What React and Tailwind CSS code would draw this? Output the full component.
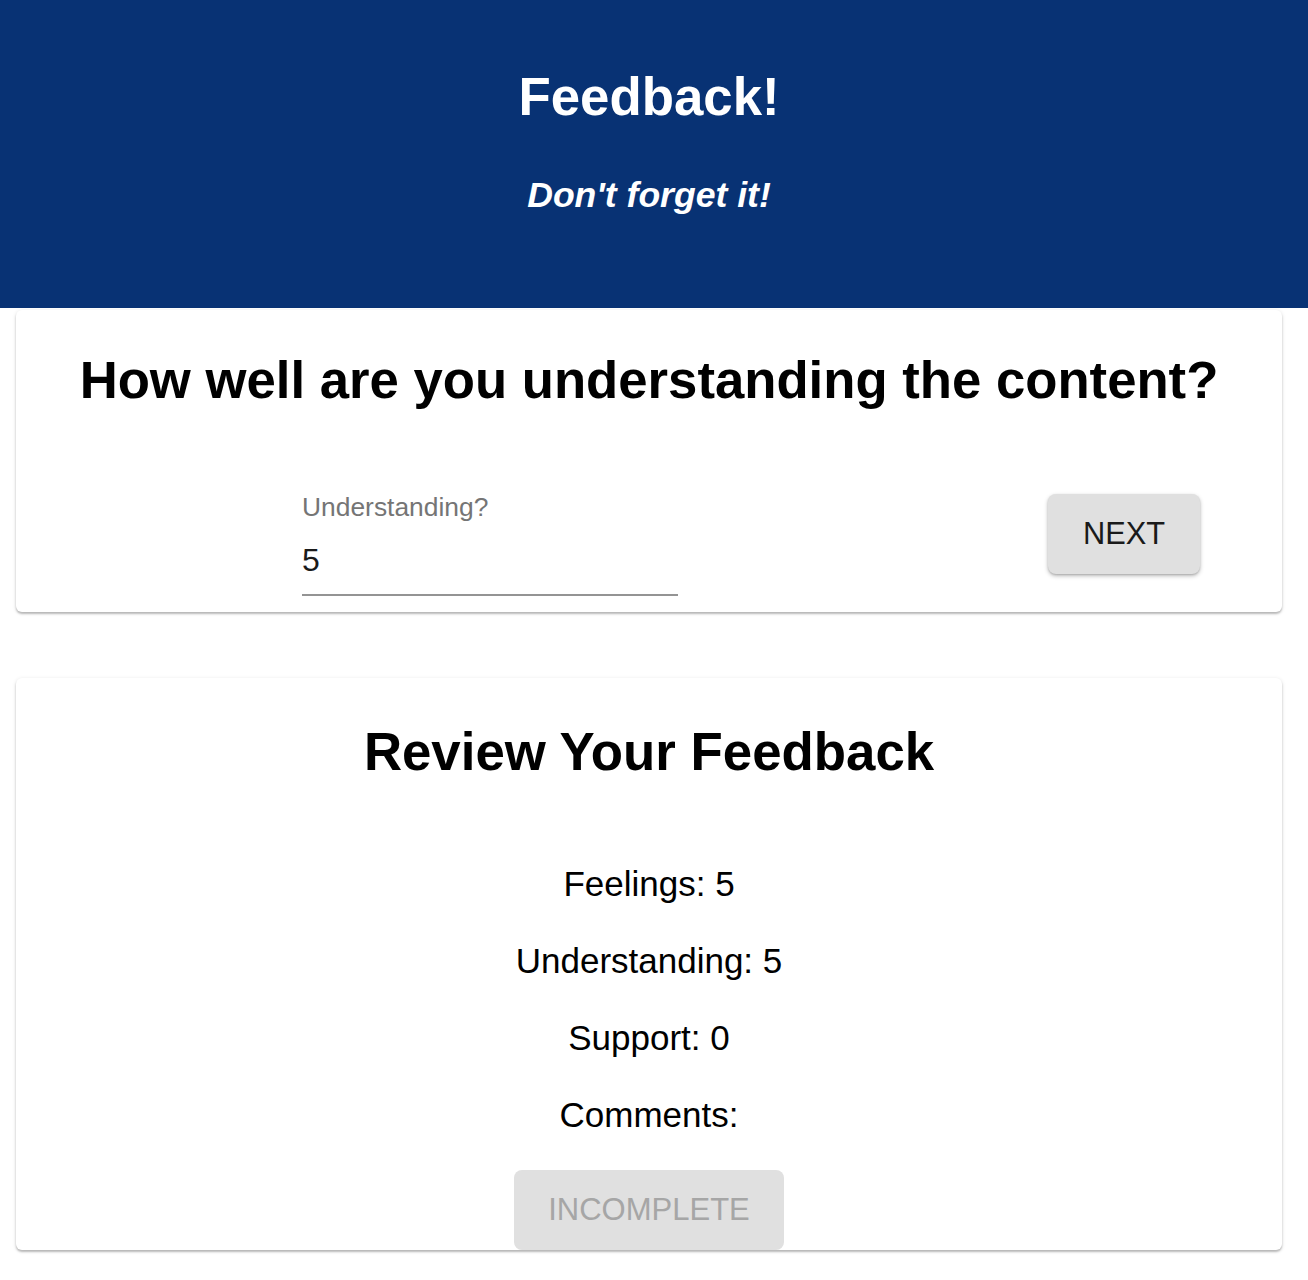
import React, { useState } from 'react';

const App = () => {
  const [understanding, setUnderstanding] = useState('5');
  const feedback = { feeling: 5, understanding: 5, support: 0, comments: '' };

  return (
    <div className="min-h-[1280px] bg-white font-['Liberation_Sans',Arial,sans-serif]">
      <header className="bg-[#083274] h-[308px] pr-[10px] flex flex-col items-center text-white">
        <h1 className="mt-[66px] text-[52.8px] leading-[62px] font-bold">Feedback!</h1>
        <h4 className="mt-[46px] text-[35.6px] leading-[42px] font-bold italic">Don't forget it!</h4>
      </header>

      <div className="pr-[10px]">
        <div className="mx-[16px] mt-[2px] bg-white rounded-[6px] shadow-[0_2px_2px_rgba(0,0,0,0.22),0_1px_4px_rgba(0,0,0,0.12)] h-[302px]">
          <h2 className="pt-[38px] text-center text-[52.7px] leading-[64px] font-bold text-black">
            How well are you understanding the content?
          </h2>
          <div className="flex items-start mt-[80px]">
            <div className="ml-[286px] w-[376px] flex flex-col">
              <label className="text-[26.4px] leading-[30px] text-[#757575]">Understanding?</label>
              <input
                value={understanding}
                onChange={(e) => setUnderstanding(e.target.value)}
                className="mt-[14px] h-[60px] pb-[10px] text-[32px] text-[#1a1a1a] outline-none border-b-2 border-[#949494] bg-transparent"
              />
            </div>
            <button className="ml-[370px] mt-[2px] w-[152px] h-[80px] bg-[#e0e0e0] rounded-[8px] text-[30.8px] text-[#1a1a1a] shadow-[0_2px_4px_rgba(0,0,0,0.25),0_1px_2px_rgba(0,0,0,0.15)]">
              NEXT
            </button>
          </div>
        </div>

        <div className="mx-[16px] mt-[66px] bg-white rounded-[6px] shadow-[0_2px_2px_rgba(0,0,0,0.22),0_1px_4px_rgba(0,0,0,0.12)] h-[572px] flex flex-col items-center">
          <h2 className="mt-[44px] text-[52.8px] leading-[60px] font-bold text-black">Review Your Feedback</h2>
          <div className="mt-[82px] flex flex-col items-center gap-[37px] text-[35px] leading-[40px] text-black">
            <p>Feelings: {feedback.feeling}</p>
            <p>Understanding: {feedback.understanding}</p>
            <p>Support: {feedback.support}</p>
            <p>Comments: {feedback.comments}</p>
          </div>
          <button disabled className="mt-[35px] w-[270px] h-[80px] bg-[#e0e0e0] rounded-[8px] text-[31px] text-[#a6a6a6]">
            INCOMPLETE
          </button>
        </div>
      </div>
    </div>
  );
};

export default App;
